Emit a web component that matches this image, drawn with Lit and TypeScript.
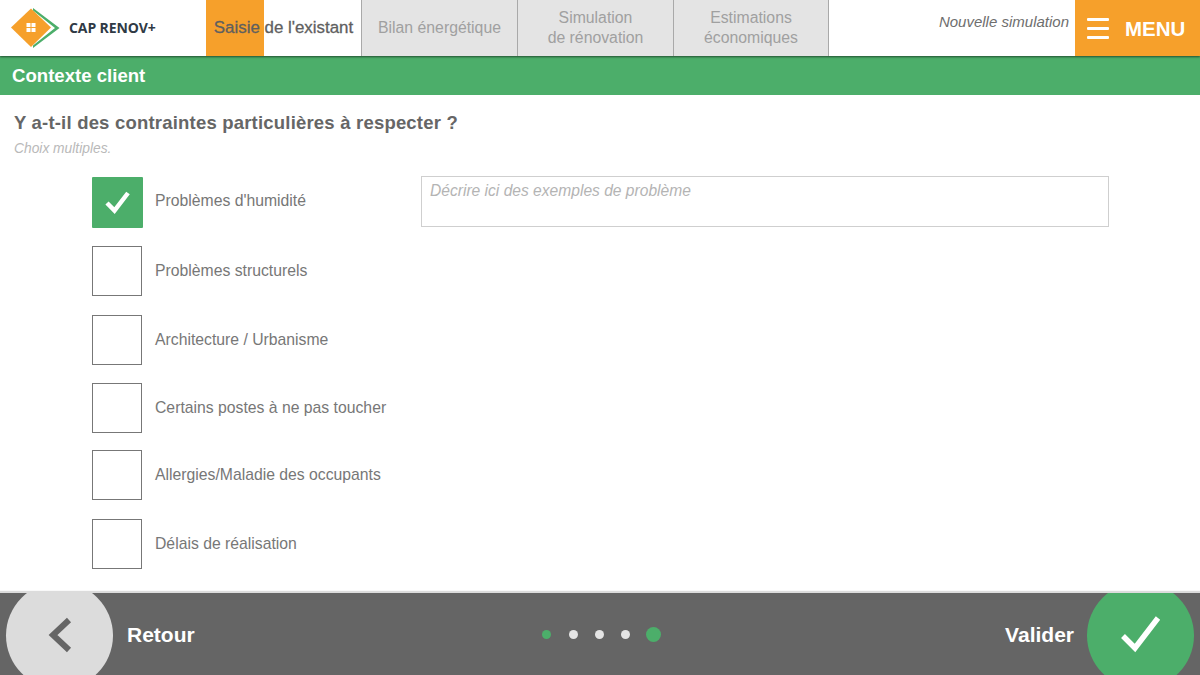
import { LitElement, html, css } from "lit";
import { customElement } from "lit/decorators.js";

const rows = [
  { label: "Problèmes d'humidité", checked: true },
  { label: "Problèmes structurels", checked: false },
  { label: "Architecture / Urbanisme", checked: false },
  { label: "Certains postes à ne pas toucher", checked: false },
  { label: "Allergies/Maladie des occupants", checked: false },
  { label: "Délais de réalisation", checked: false },
];

@customElement("app-root")
export class AppRoot extends LitElement {
  static styles = css`
    :host {
      display: flex;
      flex-direction: column;
      width: 1200px;
      height: 675px;
      overflow: hidden;
      background: #fff;
      font-family: "Liberation Sans", Arial, sans-serif;
      color: #666;
    }
    header {
      display: flex;
      height: 56px;
      flex: none;
      position: relative;
      z-index: 1;
      box-shadow: 0 1px 2px rgba(0, 0, 0, 0.55);
      background: #fff;
    }
    .brand {
      width: 205px;
      flex: none;
      display: flex;
      align-items: center;
      padding-left: 10px;
      box-sizing: border-box;
      gap: 9px;
    }
    .brand span {
      font: 700 14px/1 "Open Sans", sans-serif;
      color: #2f3a45;
      letter-spacing: -0.1px;
    }
    .tabs {
      display: flex;
      flex: none;
    }
    .tab {
      width: 156px;
      box-sizing: border-box;
      border-left: 1px solid #a9a9a9;
      background: #e4e4e4;
      color: #a0a0a0;
      font-size: 15.8px;
      line-height: 20px;
      display: flex;
      align-items: center;
      justify-content: center;
      text-align: center;
      white-space: nowrap;
      padding-bottom: 1px;
    }
    .tab.active {
      background: linear-gradient(90deg, #f6a02b 58px, #fff 58px);
      color: #5f5f5f;
      border-left: 1px solid #fff;
      font-size: 16.9px;
      -webkit-text-stroke: 0.3px #5f5f5f;
    }
    .tab.end {
      border-right: 1px solid #a9a9a9;
    }
    .new {
      flex: 1;
      text-align: right;
      padding: 13px 6px 0 0;
      font-size: 15px;
      font-style: italic;
      color: #6e6e6e;
      line-height: 18px;
    }
    .menu {
      width: 125px;
      flex: none;
      background: #f6a02b;
      color: #fff;
      display: flex;
      align-items: center;
      padding: 2px 0 0 12px;
      box-sizing: border-box;
      gap: 16px;
      font-size: 20.5px;
      font-weight: 700;
    }
    .bars {
      width: 22px;
      height: 21px;
      margin-top: -2px;
      display: flex;
      flex-direction: column;
      justify-content: space-between;
    }
    .bars i {
      display: block;
      height: 3px;
      background: #fff;
      border-radius: 1px;
    }
    .band {
      flex: none;
      height: 39px;
      background: #4cae6a;
      color: #fff;
      font-size: 18.6px;
      font-weight: 700;
      line-height: 39px;
      padding-left: 12px;
    }
    main {
      flex: 1;
      min-height: 0;
      padding: 16px 14px 0;
    }
    h1 {
      margin: 0;
      font-size: 18.5px;
      line-height: 23px;
      font-weight: 700;
      color: #666;
      letter-spacing: 0.2px;
    }
    .hint {
      margin-top: 7px;
      font-size: 13.8px;
      line-height: 16px;
      font-style: italic;
      color: #b9b9b9;
    }
    .form {
      display: flex;
      margin-top: 20px;
      padding-left: 78px;
    }
    .list {
      width: 329px;
      flex: none;
      display: flex;
      flex-direction: column;
    }
    .row {
      display: flex;
      align-items: center;
      gap: 13px;
      height: 50px;
      margin-bottom: 19px;
      font-size: 15.75px;
      color: #777;
    }
    .row:nth-child(3) {
      margin-bottom: 18px;
    }
    .row:nth-child(4) {
      margin-bottom: 17px;
    }
    .row.first span {
      margin-bottom: 2px;
    }
    .box {
      width: 50px;
      height: 50px;
      box-sizing: border-box;
      border: 1px solid #777;
      flex: none;
      display: flex;
      align-items: center;
      justify-content: center;
    }
    .box.on {
      width: 51px;
      height: 51px;
      margin-right: -1px;
      background: #4cae6a;
      border: none;
      border-radius: 1px;
    }
    .text {
      width: 688px;
      height: 51px;
      margin-top: -1px;
      box-sizing: border-box;
      border: 1px solid #cfcfcf;
      padding: 5px 8px;
      font-size: 15.6px;
      line-height: 18px;
      font-style: italic;
      color: #b4b4b4;
    }
    footer {
      flex: none;
      height: 82px;
      background: #656565;
      box-shadow: 0 -2px 1px #dcdcdc;
      overflow: hidden;
      display: grid;
      grid-template-columns: 1fr auto 1fr;
      align-items: center;
      padding: 2px 6px 0;
      box-sizing: border-box;
      color: #fff;
      font-size: 21px;
      font-weight: 700;
    }
    .side {
      display: flex;
      align-items: center;
      gap: 14px;
      height: 80px;
    }
    .side.right {
      justify-content: flex-end;
      gap: 13px;
    }
    .circle {
      width: 107px;
      height: 107px;
      flex: none;
      border-radius: 50%;
      background: #dcdcdc;
      display: flex;
      align-items: center;
      justify-content: center;
    }
    .circle.go {
      background: #4cae6a;
    }
    .dots {
      display: flex;
      align-items: center;
      gap: 17.3px;
      margin: 0 0 2px 3px;
    }
    .dots i {
      width: 9px;
      height: 9px;
      border-radius: 50%;
      background: #e4e4e4;
    }
    .dots i.done {
      background: #4cae6a;
    }
    .dots i.now {
      width: 15px;
      height: 15px;
      background: #4cae6a;
      margin-left: -2px;
    }
  `;

  render() {
    return html`
      <header>
        <div class="brand">
          <svg width="50" height="42" viewBox="0 0 50 42">
            <polygon points="23,1 49.500,21 23,41 23,38.500 45,21 23,3.500" fill="#4cae6a" />
            <polygon points="1,20.500 21,1.500 41,20.500 21,40" fill="#f6a02b" />
            <g fill="#fff">
              <rect x="16.500" y="16" width="4" height="4" />
              <rect x="21.500" y="16" width="4" height="4" />
              <rect x="16.500" y="21" width="4" height="4" />
              <rect x="21.500" y="21" width="4" height="4" />
            </g>
          </svg>
          <span>CAP RENOV+</span>
        </div>
        <nav class="tabs">
          <div class="tab active">Saisie de l'existant</div>
          <div class="tab">Bilan énergétique</div>
          <div class="tab">Simulation<br />de rénovation</div>
          <div class="tab end">Estimations<br />économiques</div>
        </nav>
        <div class="new">Nouvelle simulation</div>
        <div class="menu">
          <div class="bars"><i></i><i></i><i></i></div>
          MENU
        </div>
      </header>
      <div class="band">Contexte client</div>
      <main>
        <h1>Y a-t-il des contraintes particulières à respecter ?</h1>
        <div class="hint">Choix multiples.</div>
        <div class="form">
          <div class="list">
            ${rows.map(
              (r) => html`
                <div class="row ${r.checked ? "first" : ""}">
                  <div class="box ${r.checked ? "on" : ""}">
                    ${r.checked
                      ? html`<svg width="28" height="26" viewBox="0 0 28 26">
                          <path d="M3 14 L10.500 21.500 L24 4" fill="none" stroke="#fff" stroke-width="4.500" />
                        </svg>`
                      : ""}
                  </div>
                  <span>${r.label}</span>
                </div>
              `
            )}
          </div>
          <div class="text">Décrire ici des exemples de problème</div>
        </div>
      </main>
      <footer>
        <div class="side">
          <div class="circle">
            <svg width="26" height="36" viewBox="0 0 26 36">
              <path d="M22 3 L6 18 L22 33" fill="none" stroke="#656565" stroke-width="6" />
            </svg>
          </div>
          Retour
        </div>
        <div class="dots">
          <i class="done"></i><i></i><i></i><i></i><i class="now"></i>
        </div>
        <div class="side right">
          Valider
          <div class="circle go">
            <svg width="42" height="40" viewBox="0 0 42 40">
              <path d="M3 21 L15 33 L38 3" fill="none" stroke="#fff" stroke-width="5.500" />
            </svg>
          </div>
        </div>
      </footer>
    `;
  }
}
